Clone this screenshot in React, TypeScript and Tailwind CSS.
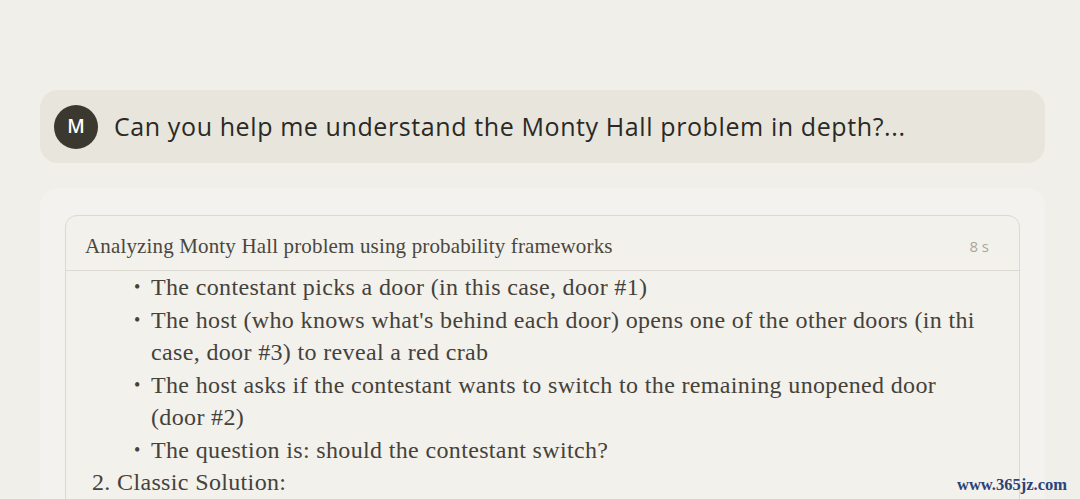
const bullets: string[][] = [
  ["The contestant picks a door (in this case, door #1)"],
  [
    "The host (who knows what's behind each door) opens one of the other doors (in thi",
    "case, door #3) to reveal a red crab",
  ],
  [
    "The host asks if the contestant wants to switch to the remaining unopened door",
    "(door #2)",
  ],
  ["The question is: should the contestant switch?"],
];

const serif = { fontFamily: '"Liberation Serif", "Times New Roman", serif' };
const sans = { fontFamily: '"Open Sans", sans-serif' };

const App = () => {
  return (
    <div className="w-[1080px] h-[499px] overflow-hidden bg-[#f1efea] relative">
      <div className="pt-[90px] px-[40px] pr-[35px]">
        <div className="h-[73px] rounded-[18px] bg-[#e8e5dc] flex items-center pl-[14px] gap-[16px]">
          <div
            className="w-[44px] h-[44px] rounded-full bg-[#3b382f] text-white flex items-center justify-center text-[19px] font-semibold"
            style={sans}
          >
            M
          </div>
          <span className="text-[25px] text-[#2a2925] tracking-[0.6px]" style={sans}>
            Can you help me understand the Monty Hall problem in depth?...
          </span>
        </div>

        <div className="mt-[25px] rounded-t-[18px] bg-[#f4f2ee] pt-[27px] px-[25px] h-[400px]">
          <div className="border border-[#dcd9d0] rounded-t-[12px] bg-[#f3f1ec] h-[300px]">
            <div className="h-[55px] flex items-center justify-between pt-[7px] pl-[19px] pr-[30px] border-b border-[#dcd9d0]">
              <span className="text-[21px] tracking-[0.15px] text-[#4a4740]" style={serif}>
                Analyzing Monty Hall problem using probability frameworks
              </span>
              <span className="text-[15px] text-[#a9a69e]" style={sans}>
                8 s
              </span>
            </div>
            <div
              className="w-[913px] overflow-hidden text-[24px] leading-[32.5px] tracking-[0.35px] text-[#45423b]"
              style={serif}
            >
              <ul className="pl-[68px]">
                {bullets.map((lines) => (
                  <li key={lines[0]} className="flex">
                    <span className="w-[17px] shrink-0 text-[18px]">•</span>
                    <span className="whitespace-nowrap">
                      {lines.map((line) => (
                        <span key={line} className="block">
                          {line}
                        </span>
                      ))}
                    </span>
                  </li>
                ))}
              </ul>
              <div className="pl-[26px]">2. Classic Solution:</div>
            </div>
          </div>
        </div>
      </div>
      <span
        className="absolute left-[957px] top-[473px] text-[16.5px] font-bold text-[#2b4476]"
        style={serif}
      >
        www.365jz.com
      </span>
    </div>
  );
};

export default App;
